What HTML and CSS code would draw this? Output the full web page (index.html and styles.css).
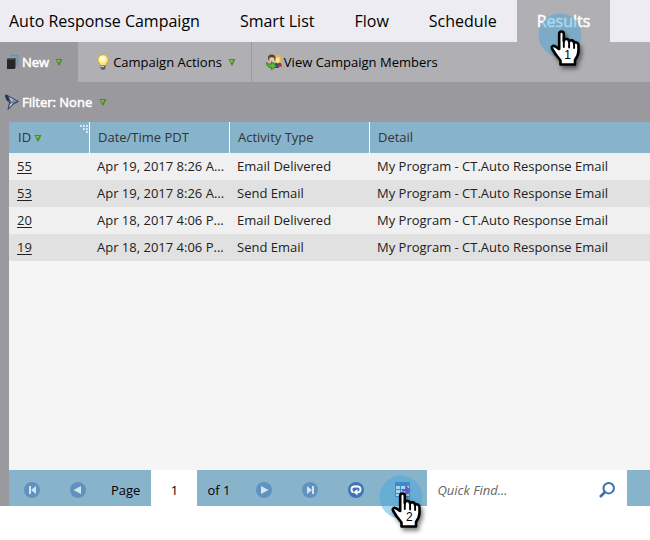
FILE: index.html
```html
<!DOCTYPE html>
<html lang="en">
<head>
<meta charset="utf-8">
<title>Auto Response Campaign</title>
<link rel="stylesheet" href="styles.css">
</head>
<body>
<svg class="defs" aria-hidden="true">
  <symbol id="arrow" viewBox="0 0 8 8"><path d="M.5 1h7L4.500 7.500h-1z" fill="#4c8c2a"/><path d="M2 2h3L4 5z" fill="#8cc455"/></symbol>
  <symbol id="hand" viewBox="0 0 48 58">
    <path d="M21.200 36V21c0-3.300 4.600-3.300 4.600 0V28c.5-2.800 5-2.500 5.300.5 1-2 4.700-1.500 5 1.500 1.500-1.500 4.400-.5 4.400 2.500v5.500c0 4-1.500 6-3.500 9v4.500H22.500V47.500c-3-3.500-5.500-6.500-8.300-11.500-1.300-2.700 1-3.800 3-2.700 1.600 1 2.700 2.400 4 2.700z" fill="#fff" stroke="#000" stroke-width="2.600" stroke-linejoin="round"/>
    <path d="M25.800 26v8M31.100 28V34.500M36.100 30v5" fill="none" stroke="#000" stroke-width="1.900" stroke-linecap="round"/>
  </symbol>
</svg>

<nav class="tabs">
  <a class="tab tab-title" href="#">Auto Response Campaign</a>
  <a class="tab" href="#">Smart List</a>
  <a class="tab" href="#">Flow</a>
  <a class="tab" href="#">Schedule</a>
  <a class="tab tab-active" href="#">Results
    <span class="pointer pointer-tab"><svg><use href="#hand"/></svg><span class="step">1</span></span>
  </a>
</nav>

<div class="toolbar">
  <button class="tool tool-new" type="button">
    <svg class="icon" viewBox="0 0 16 16"><path d="M5 1.500h7.500V12" fill="none" stroke="#4a9ad4" stroke-width="1.500"/><path d="M3 4h7.500v9.500L9.500 15H2V5.500z" fill="#262626"/><path d="M3.200 4h6.800l-1 1.500H2.500z" fill="#58585b"/></svg>
    <span>New</span>
    <svg class="caret"><use href="#arrow"/></svg>
  </button>
  <button class="tool tool-actions" type="button">
    <svg class="icon" viewBox="0 0 16 16"><path d="M8 .5a5.300 5.300 0 0 0-5.300 5.300c0 2.700 2.100 3.400 2.800 5.700h5c.7-2.300 2.800-3 2.800-5.700A5.300 5.300 0 0 0 8 .5z" fill="#fbe87a" stroke="#cfa548"/><circle cx="7.500" cy="5" r="3" fill="#fffbd0"/><path d="M5.500 11.500h5V14L9.500 15.700h-3L5.500 14z" fill="#5e6168"/><path d="M6 12.500h3" stroke="#d8dade"/></svg>
    <span>Campaign Actions</span>
    <svg class="caret"><use href="#arrow"/></svg>
  </button>
  <button class="tool tool-members" type="button">
    <svg class="icon" viewBox="0 0 16 16"><path d="M9 13q0-5 3.500-5 3 0 3.500 4.500z" fill="#a93a2b"/><path d="M8.500 1.500Q12-1 14.500 1.500L15.500 8 12 9.500 9 8z" fill="#e3b944"/><path d="M10 3.500h3.500v4L11.500 9 10 8z" fill="#f8e3b0"/><path d="M6 14V9.500h5.500l1.500 4.500z" fill="#284f8e"/><path d="M2 5Q1.500.5 5.500.5 10 .5 9.500 5L8 7H3.500z" fill="#5c442c"/><path d="M3.300 4q2.700-1.500 5 0v3.200Q5.500 11 3.500 7.500z" fill="#edc79a"/><path d="M.5 8.500l2 1.500h3V7.500L10.500 12l-5 4v-2.500H3Q.5 12 .5 8.500z" fill="#5bb936" stroke="#297719" stroke-width=".8"/></svg>
    <span>View Campaign Members</span>
  </button>
</div>

<main class="panel">
  <button class="filter" type="button">
    <svg class="icon" viewBox="0 0 16 16"><path d="M2.500 1L14.500 7.500 9.500 10l-5.500 5.500L5.500 9z" fill="#566a85" stroke="#26364c" stroke-width=".8"/><path d="M4.500 2.800L12.500 7.300 8 8.200z" fill="#b9c8da"/><path d="M6.500 9.700L9 8.900l-4 4.800z" fill="#e6edf5"/><ellipse cx="3.200" cy="4" rx="1.500" ry="3.700" transform="rotate(-25 3.200 4)" fill="#26364c"/><path d="M8 5.500l5 2-4 1.200z" fill="#7188a7"/></svg>
    <span>Filter: None</span>
    <svg class="caret"><use href="#arrow"/></svg>
  </button>

  <section class="grid">
    <table>
      <colgroup><col class="col-id"><col class="col-mid"><col class="col-mid"><col></colgroup>
      <thead>
        <tr>
          <th class="th-id">ID <svg class="caret caret-sort"><use href="#arrow"/></svg><svg class="grip" viewBox="0 0 9 9"><path d="M0 1h9M3 4h6M6 7h3" stroke="#fff" stroke-width="1.500" stroke-dasharray="1.700 1.300"/></svg></th>
          <th>Date/Time PDT</th><th>Activity Type</th><th>Detail</th>
        </tr>
      </thead>
      <tbody>
        <tr><td><a href="#">55</a></td><td>Apr 19, 2017 8:26 A...</td><td>Email Delivered</td><td>My Program - CT.Auto Response Email</td></tr>
        <tr><td><a href="#">53</a></td><td>Apr 19, 2017 8:26 A...</td><td>Send Email</td><td>My Program - CT.Auto Response Email</td></tr>
        <tr><td><a href="#">20</a></td><td>Apr 18, 2017 4:06 P...</td><td>Email Delivered</td><td>My Program - CT.Auto Response Email</td></tr>
        <tr><td><a href="#">19</a></td><td>Apr 18, 2017 4:06 P...</td><td>Send Email</td><td>My Program - CT.Auto Response Email</td></tr>
      </tbody>
    </table>

    <footer class="pager">
      <button class="page-btn dim" type="button" aria-label="First page"><svg class="icon" viewBox="0 0 16 16"><circle cx="8" cy="8" r="8" fill="#4a80bc"/><path d="M5 4h2v8H5zM12 4v8L7 8z" fill="#fff"/></svg></button>
      <button class="page-btn dim" type="button" aria-label="Previous page"><svg class="icon" viewBox="0 0 16 16"><circle cx="8" cy="8" r="8" fill="#4a80bc"/><path d="M11 4v8L3.500 8z" fill="#fff"/></svg></button>
      <label class="page-label" for="page">Page</label>
      <input class="page-input" id="page" type="text" value="1">
      <span class="page-total">of 1</span>
      <button class="page-btn dim" type="button" aria-label="Next page"><svg class="icon" viewBox="0 0 16 16"><circle cx="8" cy="8" r="8" fill="#4a80bc"/><path d="M5 4v8l7.500-4z" fill="#fff"/></svg></button>
      <button class="page-btn dim" type="button" aria-label="Last page"><svg class="icon" viewBox="0 0 16 16"><circle cx="8" cy="8" r="8" fill="#4a80bc"/><path d="M10 4h2v8h-2zM5 4v8l5-4z" fill="#fff"/></svg></button>
      <button class="page-btn" type="button" aria-label="Refresh"><svg class="icon" viewBox="0 0 16 16"><circle cx="8" cy="8" r="8" fill="#3f74b8"/><path d="M5.500 10.300A3 3 0 0 1 6 4.500h4a3 3 0 0 1 .5 5.800H9" fill="none" stroke="#fff" stroke-width="1.800"/><path d="M9.500 7v6.500L5.500 10.300z" fill="#fff"/></svg></button>
      <button class="page-btn export" type="button" aria-label="Export">
        <svg class="icon" viewBox="0 0 16 16"><path d="M0 0h15v15H0z" fill="#3f74b0"/><path d="M1 4h4v3H1zM6 4h4v3H6zM11 4h3v3h-3zM1 8h4v3H1zM6 8h4v3H6zM1 12h4v2H1zM6 12h4v2H6zM11 12h3v2h-3z" fill="#fff"/><path d="M7 7h4V3.500L16 8.200 11 13V9.500H7z" fill="#7a28a8"/></svg>
        <span class="pointer pointer-export"><svg><use href="#hand"/></svg><span class="step">2</span></span>
      </button>
      <div class="search">
        <input type="text" placeholder="Quick Find..." aria-label="Quick Find">
        <button type="button" aria-label="Search"><svg class="icon" viewBox="0 0 16 16"><circle cx="9.700" cy="6.200" r="5.200" fill="none" stroke="#3972b4" stroke-width="2"/><path d="M6 10l-5 5" stroke="#3972b4" stroke-width="2.600"/></svg></button>
      </div>
    </footer>
  </section>
</main>
</body>
</html>
```
FILE: styles.css
```css
* { box-sizing: border-box; }

body {
  margin: 0;
  min-height: 100vh;
  display: flex;
  flex-direction: column;
  background: #fff;
  color: #000;
  font: 13px/18px "Open Sans", sans-serif;
}

button, input { font: inherit; color: inherit; border: 0; padding: 0; background: none; }
svg { display: block; flex: none; }
.defs { width: 0; height: 0; position: absolute; }
.icon { width: 16px; height: 16px; }
.caret { width: 8px; height: 8px; }

.tabs { display: flex; height: 42px; background: #edecf2; }
.tab {
  padding: 0 20px;
  color: #000;
  font-size: 16px;
  line-height: 42px;
  text-decoration: none;
  white-space: nowrap;
}
.tab-title { padding-left: 9px; }
.tab-active {
  position: relative;
  background: #b0afb3;
  color: #fff;
  -webkit-text-stroke: 0.5px #fff;
}

.pointer {
  position: absolute;
  width: 48px;
  height: 58px;
  background: radial-gradient(circle at 22px 22px, rgba(64, 166, 222, 0.46) 21px, transparent 22px);
  -webkit-text-stroke: 0;
}
.pointer svg { width: 48px; height: 58px; overflow: visible; filter: drop-shadow(2px 3px 2px rgba(0, 0, 0, 0.5)); }
.pointer-tab { left: 21px; top: 13px; }
.pointer-export { left: 0; top: 5px; z-index: 1; }
.step {
  position: absolute;
  left: 24px;
  top: 34px;
  width: 12px;
  color: #000;
  font: 12px/16px "Liberation Sans", sans-serif;
  text-align: center;
}

.toolbar { display: flex; height: 40px; background: #b0afb3; }
.tool { display: flex; align-items: center; white-space: nowrap; }
.tool-new {
  gap: 6px;
  padding: 0 15px 0 5px;
  background: #9a999d;
}
.tool-new .icon { margin-right: -5px; }
.tool-new, .filter { color: #fff; -webkit-text-stroke: 0.5px #fff; }
.tool-actions { padding: 0 15px 0 17px; border-right: 1px solid #9a999d; }
.tool-actions .icon { margin-right: 2px; }
.tool-actions .caret { margin-left: 6px; }
.tool-members { padding-left: 14px; gap: 2px; }

.panel {
  display: flex;
  flex-direction: column;
  flex: 1;
  margin-bottom: 34px;
  padding-left: 9px;
  background: #9a999d;
}
.filter { display: flex; align-items: center; align-self: flex-start; height: 40px; margin-left: -5px; gap: 2px; }
.filter .caret { margin-left: 5px; }

.grid { display: flex; flex-direction: column; flex: 1; background: #f5f5f5; color: #222; }
table { width: 100%; table-layout: fixed; border-collapse: separate; border-spacing: 0; }
.col-id { width: 81px; }
.col-mid { width: 140px; }
th {
  height: 31px;
  padding: 0 8px 2px;
  background: #88b4cb;
  color: #333;
  font-weight: 400;
  text-align: left;
  border-right: 1px solid #fff;
}
th:last-child { border-right: 0; }
.th-id { position: relative; padding-left: 9px; }
.caret-sort { display: inline-block; }
.grip { position: absolute; right: 0; top: 3px; width: 9px; height: 9px; }
td { height: 27px; padding: 0 7px 2px; white-space: nowrap; overflow: hidden; background: #f0f0f0; }
td:first-child { padding-left: 8px; }
tr:nth-child(even) td { background: #e1e1e1; }
td a { color: #222; text-underline-offset: 2px; }

.pager { display: flex; align-items: center; height: 36px; margin-top: auto; background: #88b4cb; color: #000; }
.page-btn { display: flex; align-items: center; justify-content: center; width: 46px; height: 36px; padding-top: 4px; }
.dim .icon { opacity: 0.65; }
.page-label { padding: 4px 11px 0 10px; }
.page-input { width: 46px; height: 36px; padding-top: 4px; background: #fff; text-align: center; }
.page-total { width: 44px; padding: 4px 0 0 10px; }
.export { position: relative; width: 48px; }
.search { display: flex; align-items: center; width: 200px; height: 36px; padding: 4px 12px 0 10px; background: #fff; }
.search input { flex: 1; min-width: 0; font-style: italic; }
.search input::placeholder { color: #666; opacity: 1; }
```
